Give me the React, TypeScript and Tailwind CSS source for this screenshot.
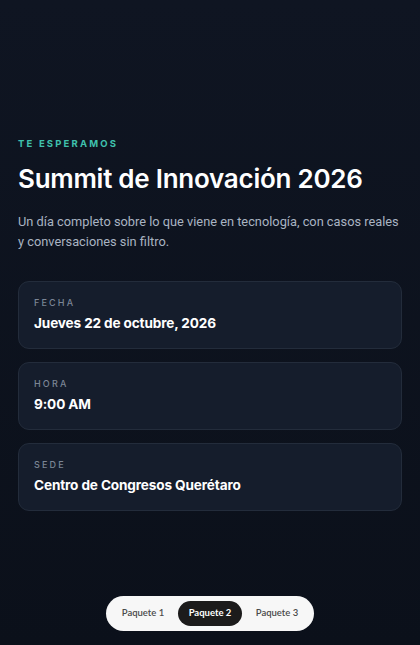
const details = [
  { label: "Fecha", value: "Jueves 22 de octubre, 2026" },
  { label: "Hora", value: "9:00 AM" },
  { label: "Sede", value: "Centro de Congresos Querétaro" },
];

const packages = ["Paquete 1", "Paquete 2", "Paquete 3"];

export default function App() {
  const active = 1;

  return (
    <div className="min-h-[645px] w-full bg-gradient-to-b from-[#0f1522] to-[#0b101a] font-['Inter','Liberation_Sans',sans-serif] flex flex-col">
      <main className="px-[18px] pt-[139px] flex flex-col">
        <p className="text-[9.5px] font-bold tracking-[0.23em] text-[#3fc1ad] leading-none">
          TE ESPERAMOS
        </p>
        <h1 className="mt-[14px] text-[26px] font-semibold leading-[32px] tracking-[-0.01em] text-white">
          Summit de Innovación 2026
        </h1>
        <p className="mt-[17px] font-['Roboto','Inter',sans-serif] text-[12.8px] leading-[20px] text-[#a9b3c2]">
          Un día completo sobre lo que viene en tecnología, con casos reales y conversaciones sin filtro.
        </p>

        <div className="mt-[29px] flex flex-col gap-[13px]">
          {details.map((d) => (
            <div
              key={d.label}
              className="rounded-[11px] border border-[#232c3b] bg-[#151d2c] px-[15px] pt-[16px] pb-[15px]"
            >
              <p className="text-[9px] font-medium uppercase tracking-[0.24em] text-[#7b8595] leading-none">
                {d.label}
              </p>
              <p className="mt-[6px] text-[13.6px] font-bold leading-[20px] tracking-[-0.01em] text-white">
                {d.value}
              </p>
            </div>
          ))}
        </div>
      </main>

      <div className="mt-auto flex justify-center pb-[14px]">
        <div className="flex items-center gap-[3px] rounded-full bg-[#f7f7f7] p-[5px] font-['Lato','Noto_Sans',sans-serif]">
          {packages.map((p, i) => (
            <button
              key={p}
              className={
                i === active
                  ? "rounded-full bg-[#1c1b1b] w-[64px] h-[25px] text-[9.5px] font-bold text-white"
                  : "rounded-full w-[64px] h-[25px] text-[9.5px] font-semibold text-[#4a4a4a]"
              }
            >
              {p}
            </button>
          ))}
        </div>
      </div>
    </div>
  );
}
